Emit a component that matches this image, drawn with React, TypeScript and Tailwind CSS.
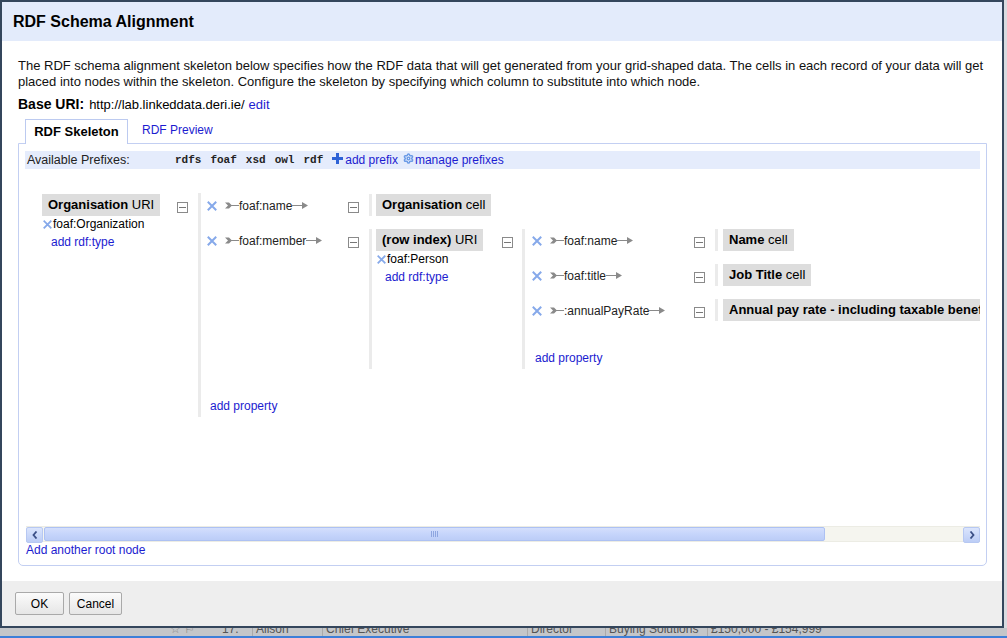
import React from 'react';
import { Settings } from 'lucide-react';

const link = 'text-[#1c1cd0]';

function RemoveX({ size = 10 }: { size?: number }) {
  return (
    <svg width={size} height={size} viewBox="0 0 10 10" className="shrink-0">
      <path d="M1.5 1.5l7 7M8.5 1.5l-7 7" stroke="#86a9ea" strokeWidth="2" strokeLinecap="square" />
    </svg>
  );
}

function Collapse() {
  return (
    <div className="shrink-0 mt-[8px] w-[11px] h-[11px] border border-[#8a8a8a] bg-white flex items-center justify-center">
      <div className="w-[7px] h-px bg-[#777]" />
    </div>
  );
}

function PropLabel({ name, className }: { name: string; className: string }) {
  return (
    <div className={`flex items-center h-[21px] mt-[1px] text-[12px] text-[#222] whitespace-nowrap ${className}`}>
      <svg width="14" height="9" viewBox="0 0 14 9" className="shrink-0">
        <path d="M0 1.5h4l3 3-3 3H0l3-3z" fill="#8a8a8a" />
        <path d="M6 4.5h8" stroke="#8a8a8a" strokeWidth="1" />
      </svg>
      <span>{name}</span>
      <svg width="17" height="9" viewBox="0 0 17 9" className="shrink-0">
        <path d="M0 4.5h11" stroke="#8a8a8a" strokeWidth="1" />
        <path d="M10 1l6 3.5-6 3.5z" fill="#8a8a8a" />
      </svg>
    </div>
  );
}

function NodeBox({ bold, rest }: { bold: string; rest: string }) {
  return (
    <div className="w-fit bg-[#dddddd] h-[22px] leading-[22px] px-[6px] text-[13px] text-black whitespace-nowrap">
      <span className="font-bold">{bold}</span> {rest}
    </div>
  );
}

function NodeDetails({ bold, rest, type, className }: { bold: string; rest: string; type: string; className: string }) {
  return (
    <div className={`shrink-0 ${className}`}>
      <NodeBox bold={bold} rest={rest} />
      <div className="flex items-center h-[14px] mt-px text-[12px] text-black">
        <span className="ml-[1px] mr-px"><RemoveX size={9} /></span>
        <span className="leading-[14px]">{type}</span>
      </div>
      <div className={`mt-[4px] pl-[9px] leading-[14px] text-[12px] ${link}`}>add rdf:type</div>
    </div>
  );
}

function AddProperty({ className }: { className: string }) {
  return <div className={`h-[35px] pt-[17px] leading-[14px] text-[12px] ${link} ${className}`}>add property</div>;
}

function InnerRow({ name, bold, rest }: { name: string; bold: string; rest: string }) {
  return (
    <div className="flex items-start">
      <div className="ml-[7px] mt-[7px]"><RemoveX /></div>
      <PropLabel name={name} className="ml-[8px] w-[144px]" />
      <Collapse />
      <div className="ml-[10px] border-l-[3px] border-[#ebebeb] pl-[5px]">
        <NodeBox bold={bold} rest={rest} />
      </div>
    </div>
  );
}

function Skeleton() {
  return (
    <div className="h-[357px] ml-px overflow-hidden">
      <div className="flex items-start pl-[16px] pt-[25px] w-[1400px]">
        <NodeDetails bold="Organisation" rest="URI" type="foaf:Organization" className="w-[135px]" />
        <Collapse />
        <div className="ml-[10px] -mt-px pt-px border-l-[3px] border-[#ebebeb] flex flex-col gap-[13px]">
          {/* foaf:name */}
          <div className="flex items-start">
            <div className="ml-[6px] mt-[7px]"><RemoveX /></div>
            <PropLabel name="foaf:name" className="ml-[8px] w-[123px]" />
            <Collapse />
            <div className="ml-[10px] border-l-[3px] border-[#ebebeb] pl-[4px]">
              <NodeBox bold="Organisation" rest="cell" />
            </div>
          </div>
          {/* foaf:member */}
          <div className="flex items-start">
            <div className="ml-[6px] mt-[7px]"><RemoveX /></div>
            <PropLabel name="foaf:member" className="ml-[8px] w-[123px]" />
            <Collapse />
            <div className="ml-[10px] border-l-[3px] border-[#ebebeb] pl-[4px] flex items-start">
              <NodeDetails bold="(row index)" rest="URI" type="foaf:Person" className="w-[126px]" />
              <Collapse />
              <div className="ml-[9px] border-l-[3px] border-[#ebebeb] flex flex-col gap-[13px]">
                <InnerRow name="foaf:name" bold="Name" rest="cell" />
                <InnerRow name="foaf:title" bold="Job Title" rest="cell" />
                <InnerRow name=":annualPayRate" bold="Annual pay rate - including taxable benefits" rest="cell" />
                <AddProperty className="pl-[10px]" />
              </div>
            </div>
          </div>
          <AddProperty className="pl-[9px]" />
        </div>
      </div>
    </div>
  );
}

function ScrollBtn({ dir }: { dir: 'l' | 'r' }) {
  return (
    <div className="w-[17px] h-[16px] shrink-0 rounded-[2px] border border-[#b7c8f2] bg-gradient-to-b from-[#dbe5fd] to-[#bccdf6] flex items-center justify-center">
      <svg width="6" height="8" viewBox="0 0 6 8">
        <path d={dir === 'l' ? 'M4.5 0.5L1.5 4l3 3.5' : 'M1.5 0.5L4.5 4l-3 3.5'} stroke="#3b4f86" strokeWidth="1.8" fill="none" />
      </svg>
    </div>
  );
}

function Scrollbar() {
  return (
    <div className="flex h-[16px] ml-px bg-[#f5f5ef] border-y border-[#ecece4]">
      <ScrollBtn dir="l" />
      <div className="flex-1 flex pl-[1px]">
        <div className="w-[781px] h-full rounded-[2px] border border-[#adc1f3] bg-gradient-to-b from-[#d4dffc] via-[#c6d5fb] to-[#bccdf7] flex items-center justify-center gap-px">
          <div className="w-px h-[6px] bg-[#8ea6e0]" />
          <div className="w-px h-[6px] bg-[#8ea6e0]" />
          <div className="w-px h-[6px] bg-[#8ea6e0]" />
          <div className="w-px h-[6px] bg-[#8ea6e0]" />
        </div>
      </div>
      <ScrollBtn dir="r" />
    </div>
  );
}

export default function App() {
  return (
    <div className="w-[1007px] h-[638px] overflow-hidden bg-[#d9dbe0] font-['Liberation_Sans',Arial,sans-serif] text-black">
      {/* dialog */}
      <div className="w-[1004px] h-[628px] border-2 border-[#34465c] flex flex-col">
        <div className="h-[39px] shrink-0 bg-[#e3ebfb] pl-[11px] flex items-center">
          <h1 className="text-[16px] font-bold pt-px">RDF Schema Alignment</h1>
        </div>
        <div className="h-[540px] shrink-0 bg-white pl-[16px] pt-[17px]">
          <p className="text-[13px] leading-[16px] text-[#111] whitespace-nowrap">
            The RDF schema alignment skeleton below specifies how the RDF data that will get generated from your grid-shaped data. The cells in each record of your data will get
            <br />
            placed into nodes within the skeleton. Configure the skeleton by specifying which column to substitute into which node.
          </p>
          <div className="mt-[6px] h-[16px] flex items-baseline text-[13px] leading-[16px]">
            <span className="text-[14px] font-bold">Base URI:</span>
            <span className="ml-[5px]">http://lab.linkeddata.deri.ie/</span>
            <span className={`ml-[4px] ${link}`}>edit</span>
          </div>
          {/* tabs */}
          <div className="mt-[6px] h-[25px] flex items-end">
            <div className="ml-[7px] w-[103px] h-[25px] -mb-px relative z-10 bg-white border border-b-0 border-[#bccaf0] flex items-center justify-center text-[13px] font-bold">
              RDF Skeleton
            </div>
            <div className={`ml-[14px] h-[25px] leading-[25px] text-[12px] ${link}`}>RDF Preview</div>
          </div>
          <div className="w-[969px] h-[423px] border border-[#c3cff2] rounded-b-[5px] px-[6px] pt-[7px]">
            <div className="h-[18px] bg-[#e5ecfc] flex items-center text-[12px]">
              <span className="w-[150px] pl-[2px] text-[12.5px] text-[#222]">Available Prefixes:</span>
              <div className="flex gap-[9px] font-['Liberation_Mono',monospace] font-bold text-[11px] text-[#222]">
                <span>rdfs</span>
                <span>foaf</span>
                <span>xsd</span>
                <span>owl</span>
                <span>rdf</span>
              </div>
              <svg width="11" height="11" viewBox="0 0 11 11" className="ml-[9px] mb-[3px]">
                <path d="M4 0h3v4h4v3H7v4H4V7H0V4h4z" fill="#2d62d6" />
              </svg>
              <span className={`ml-[2px] ${link}`}>add prefix</span>
              <Settings size={11} strokeWidth={3.2} color="#6a9ae6" className="ml-[5px] mb-[3px]" />
              <span className={`ml-[1px] ${link}`}>manage prefixes</span>
            </div>
            <Skeleton />
            <Scrollbar />
            <div className={`mt-px ml-px h-[14px] leading-[14px] text-[12px] ${link}`}>Add another root node</div>
          </div>
        </div>
        <div className="flex-1 bg-[#eeeeee] pl-[13px] pt-[11px] flex gap-[5px]">
          <button className="w-[49px] h-[23px] border border-[#a9a9a9] rounded-[2px] bg-gradient-to-b from-[#fbfbfb] to-[#e6e6e6] text-[12px]">OK</button>
          <button className="w-[53px] h-[23px] border border-[#a9a9a9] rounded-[2px] bg-gradient-to-b from-[#fbfbfb] to-[#e6e6e6] text-[12px]">Cancel</button>
        </div>
      </div>
      {/* page behind the dialog */}
      <div className="h-[8px] bg-[#c4c6c9] overflow-hidden flex text-[12px] text-[#555] leading-[14px]">
        <div className="w-[170px]" />
        <div className="w-[52px] -mt-[6px] text-[#888]">☆ ⚐</div>
        <div className="w-[30px] -mt-[6px]">17.</div>
        <div className="w-[70px] -mt-[6px] border-l border-[#aaa] pl-[3px]">Alison</div>
        <div className="w-[205px] -mt-[6px] border-l border-[#aaa] pl-[3px]">Chief Executive</div>
        <div className="w-[78px] -mt-[6px] border-l border-[#aaa] pl-[3px]">Director</div>
        <div className="w-[102px] -mt-[6px] border-l border-[#aaa] pl-[3px]">Buying Solutions</div>
        <div className="w-[140px] -mt-[6px] border-l border-[#aaa] pl-[3px]">£150,000 - £154,999</div>
      </div>
      <div className="h-[2px] bg-[#3d7fd8]" />
    </div>
  );
}
